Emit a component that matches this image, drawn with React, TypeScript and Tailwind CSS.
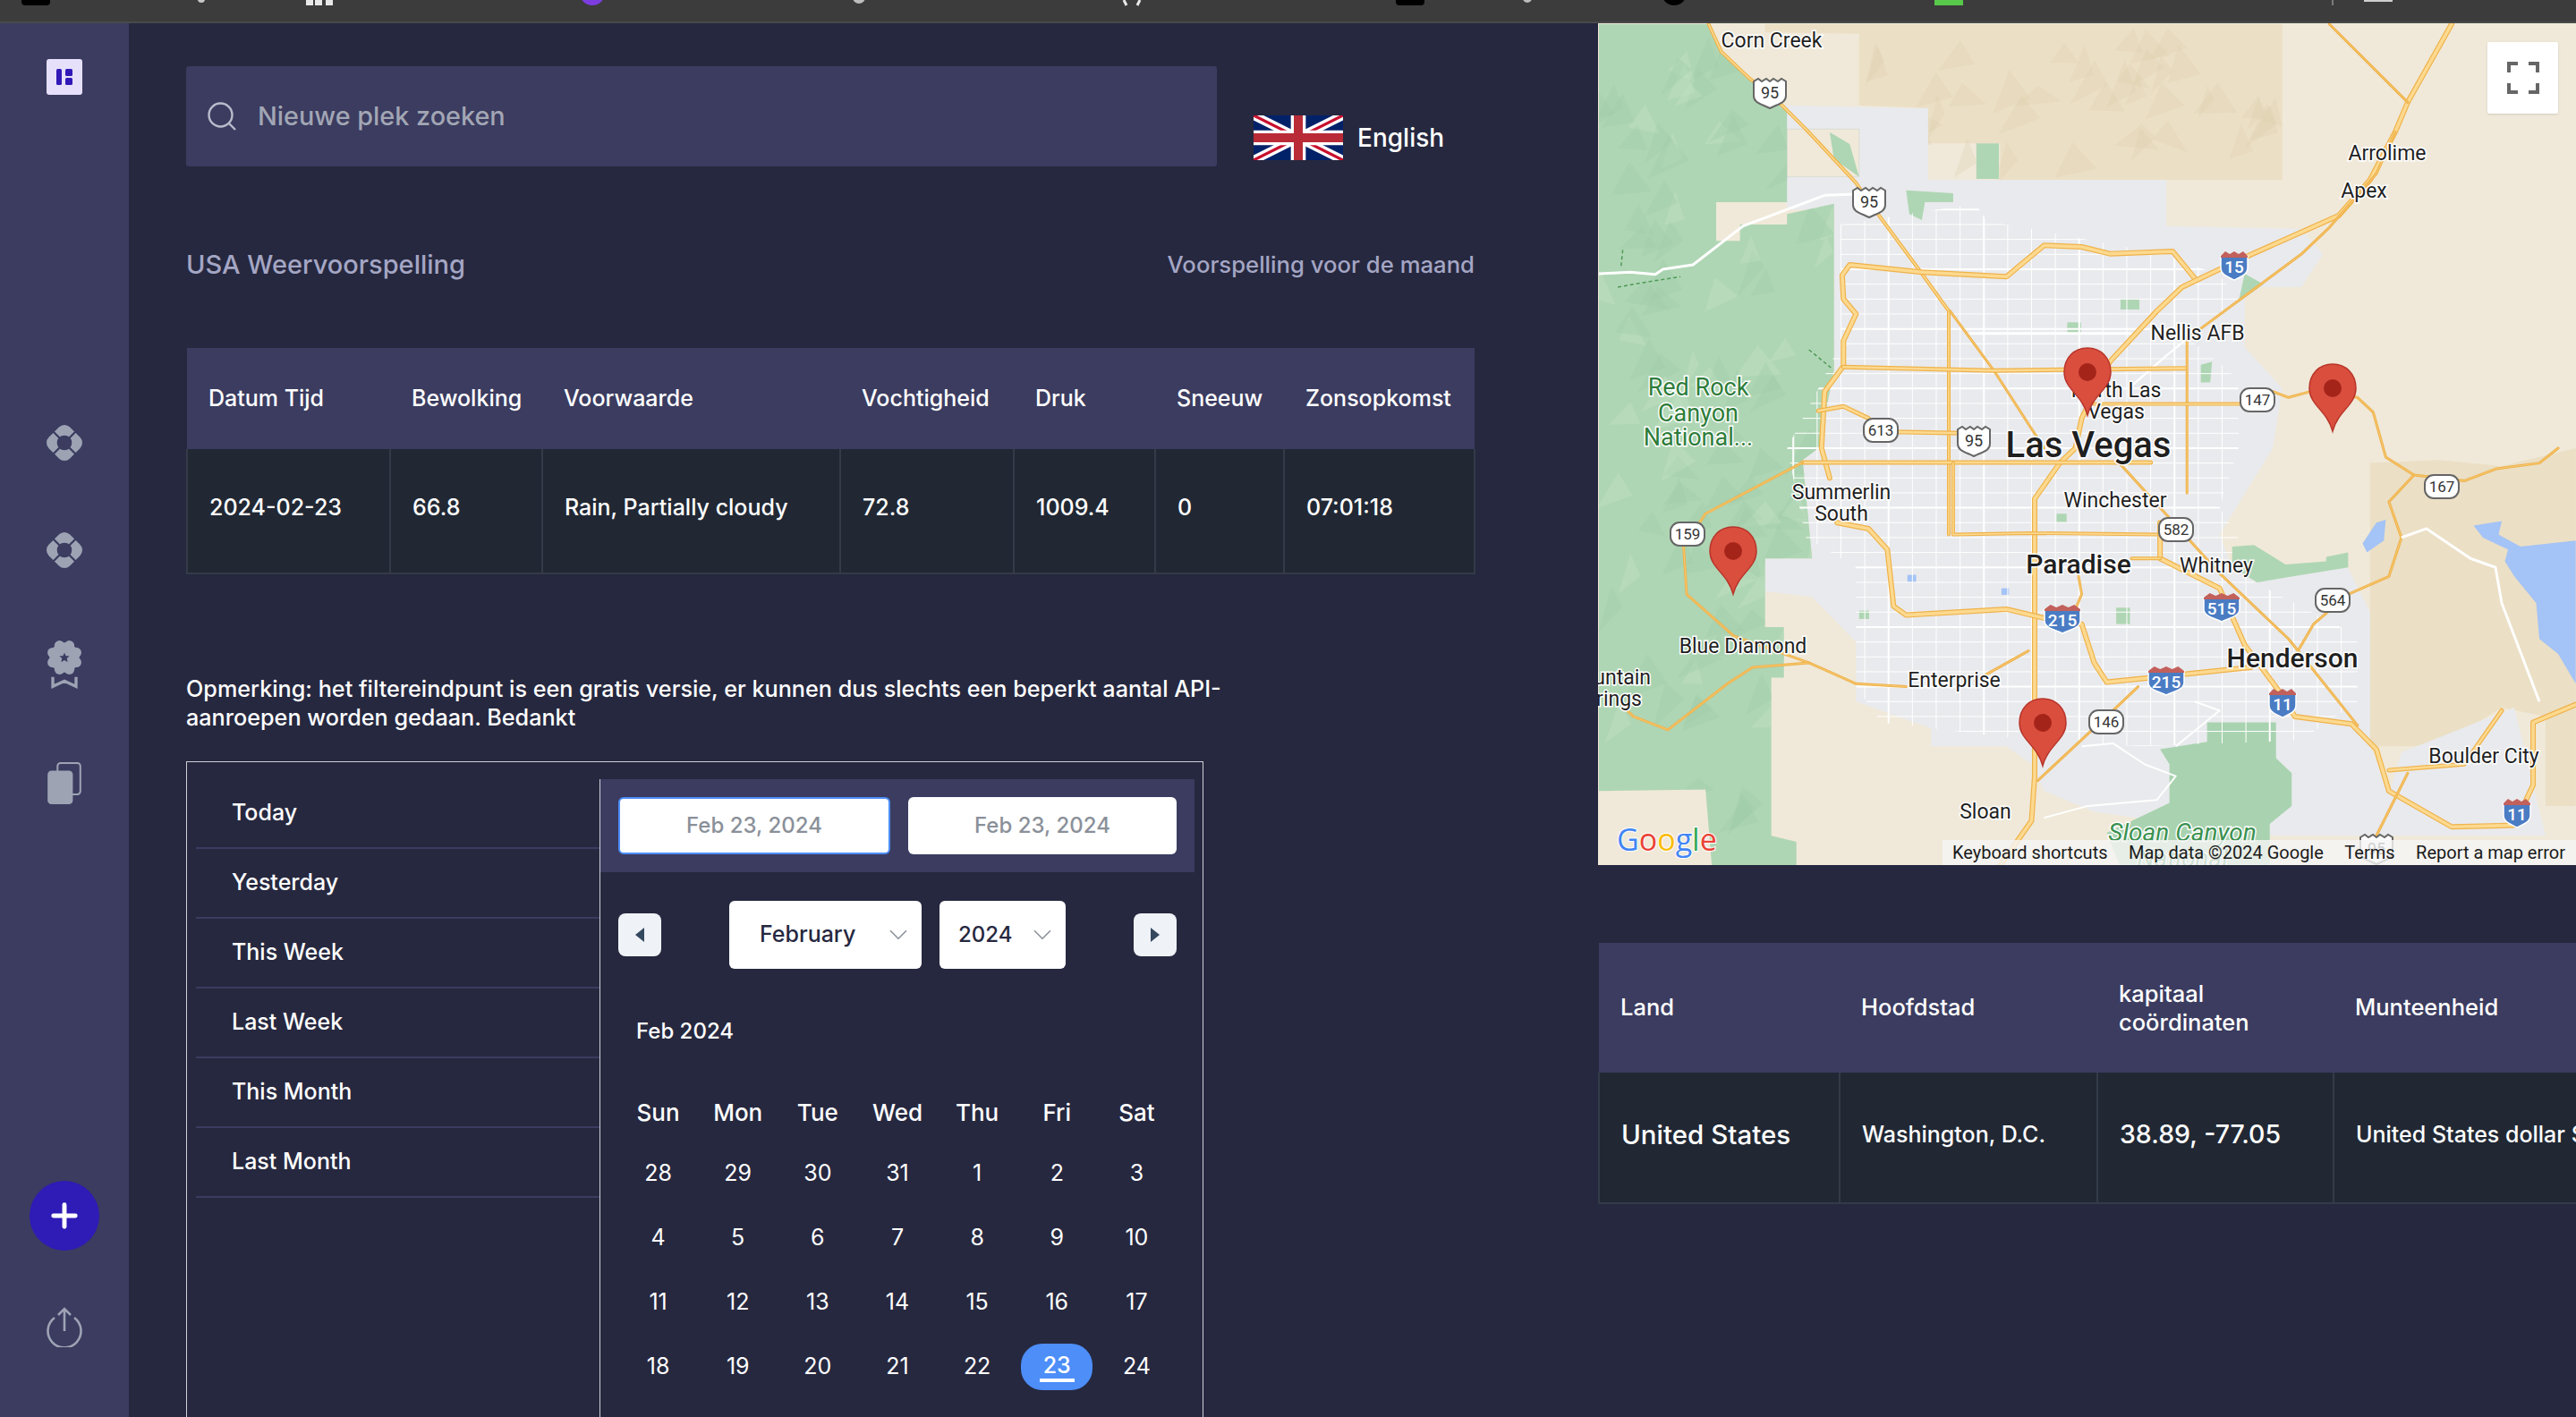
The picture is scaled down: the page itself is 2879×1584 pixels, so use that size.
import { ChevronDown, Plus } from "lucide-react";

const weatherCols = [
    { w: "w-[227px]", head: "Datum Tijd", cell: "2024-02-23" },
    { w: "w-[170px]", head: "Bewolking", cell: "66.8" },
    { w: "w-[333px]", head: "Voorwaarde", cell: "Rain, Partially cloudy" },
    { w: "w-[194px]", head: "Vochtigheid", cell: "72.8" },
    { w: "w-[158px]", head: "Druk", cell: "1009.4" },
    { w: "w-[144px]", head: "Sneeuw", cell: "0" },
    { w: "w-[213px]", head: "Zonsopkomst", cell: "07:01:18" },
];

const presets = ["Today", "Yesterday", "This Week", "Last Week", "This Month", "Last Month"];
const weekdays = ["Sun", "Mon", "Tue", "Wed", "Thu", "Fri", "Sat"];
const days = [28, 29, 30, 31, 1, 2, 3, 4, 5, 6, 7, 8, 9, 10, 11, 12, 13, 14, 15, 16, 17, 18, 19, 20, 21, 22, 23, 24];

const LifeBuoy = () => (
    <svg viewBox="0 0 120 120" className="h-10 w-10">
        <rect x="10" y="10" width="100" height="100" rx="26" transform="rotate(45 60 60)" fill="#9ea3b4" />
        <path d="M15 15L105 105M105 15L15 105" stroke="#3b3c60" strokeWidth="7" />
        <circle cx="60" cy="60" r="25" fill="#3b3c60" />
    </svg>
);

const Award = () => (
    <svg viewBox="0 0 120 165" className="h-[55px] w-10">
        <circle cx="60" cy="60" r="50" fill="#9ea3b4" />
        {[0, 45, 90, 135, 180, 225, 270, 315].map((a) => (
            <circle
                key={a}
                cx={60 + 43 * Math.cos((a * Math.PI) / 180 + 0.39)}
                cy={60 + 43 * Math.sin((a * Math.PI) / 180 + 0.39)}
                r="17"
                fill="#9ea3b4"
            />
        ))}
        <path d="M60 44l5 11h12l-9 8 3 12-11-6-11 6 3-12-9-8h12z" fill="#3b3c60" />
        <path d="M21 125v32l39-18 39 18v-32" fill="none" stroke="#9ea3b4" strokeWidth="10" />
    </svg>
);

const CopyIcon = () => (
    <svg viewBox="0 0 112 140" className="h-[47px] w-[38px]">
        <rect x="33" y="3" width="76" height="104" rx="10" fill="none" stroke="#9ea3b4" strokeWidth="6" />
        <rect x="0" y="28" width="84" height="112" rx="13" fill="#9ea3b4" />
    </svg>
);

const Sidebar = () => (
    <aside className="flex w-[144px] shrink-0 flex-col items-center bg-[#3b3c60]">
        <div className="mt-[40px] flex h-10 w-10 items-center justify-center rounded-[3px] bg-[#e6e0fb]">
            <svg viewBox="0 0 18 18" className="h-[18px] w-[18px]" fill="#3119b8">
                <rect x="0" y="0" width="6" height="18" rx="1.5" />
                <rect x="10" y="0" width="8" height="8" rx="1.5" />
                <rect x="10" y="10" width="8" height="8" rx="1.5" />
            </svg>
        </div>
        <div className="mt-[369px]">
            <LifeBuoy />
        </div>
        <div className="mt-[80px]">
            <LifeBuoy />
        </div>
        <div className="mt-[80px]">
            <Award />
        </div>
        <div className="mt-[82px]">
            <CopyIcon />
        </div>
        <button className="mt-[421px] flex h-[78px] w-[78px] items-center justify-center rounded-full bg-[#2f1bb6]">
            <Plus size={42} color="#ffffff" strokeWidth={2.8} />
        </button>
        <svg viewBox="0 0 40 46" className="mt-[62px] h-[46px] w-10" fill="none" stroke="#9ea3b4" strokeWidth="2.6">
            <path d="M9 13A18.5 18.5 0 1 0 31 13" />
            <path d="M20 28V3M13 10l7-7 7 7" />
        </svg>
    </aside>
);

const UkFlag = () => (
    <svg viewBox="0 0 60 30" preserveAspectRatio="none" className="h-[50px] w-[100px] shrink-0">
        <rect width="60" height="30" fill="#012169" />
        <path d="M0 0L60 30M60 0L0 30" stroke="#ffffff" strokeWidth="6" />
        <path d="M0 0L60 30M60 0L0 30" stroke="#c8102e" strokeWidth="2" />
        <path d="M30 0V30M0 15H60" stroke="#ffffff" strokeWidth="10" />
        <path d="M30 0V30M0 15H60" stroke="#b92b36" strokeWidth="6" />
    </svg>
);

const WeatherTable = () => (
    <table className="w-[1439px] table-fixed border-collapse text-left">
        <thead>
            <tr className="h-[113px] bg-[#3b3c60]">
                {weatherCols.map((c) => (
                    <th key={c.head} className={`${c.w} pl-[24px] text-[25px] font-medium text-white`}>
                        {c.head}
                    </th>
                ))}
            </tr>
        </thead>
        <tbody>
            <tr className="h-[139px] border-b-2 border-[#343b48] bg-[#212834]">
                {weatherCols.map((c) => (
                    <td key={c.head} className="border-x-2 border-[#343b48] pb-[6px] pl-[24px] text-[25px] font-medium text-white">
                        {c.cell}
                    </td>
                ))}
            </tr>
        </tbody>
    </table>
);

const CalendarBox = () => (
    <div className="mt-[33px] flex h-[760px] w-[1137px] border border-b-0 border-[#cfd0d8] pl-[10px] pr-[9px] pt-[19px]">
        <div className="w-[451px] shrink-0">
            {presets.map((p) => (
                <div key={p} className="flex h-[78px] items-center border-b-2 border-[#3b3c60] pl-[40px] text-[25px] font-medium text-white">
                    {p}
                </div>
            ))}
        </div>
        <div className="flex-1 border-l border-[#cfd0d8]">
            <div className="flex h-[104px] items-center gap-5 bg-[#3b3c60] px-5">
                <div className="flex h-[64px] flex-1 items-center justify-center rounded-[6px] border-2 border-[#4d8ef8] bg-white text-[24px] font-medium text-[#8a9099]">
                    Feb 23, 2024
                </div>
                <div className="flex h-[64px] flex-1 items-center justify-center rounded-[6px] bg-white text-[24px] font-medium text-[#8a9099]">
                    Feb 23, 2024
                </div>
            </div>
            <div className="mt-[32px] flex items-center justify-between px-5">
                <button className="flex h-12 w-12 items-center justify-center rounded-[8px] bg-[#eff2f7]">
                    <svg viewBox="0 0 10 16" className="h-4 w-[10px]" fill="#34495e">
                        <path d="M10 0V16L0 8Z" />
                    </svg>
                </button>
                <div className="flex gap-5">
                    <div className="flex h-[76px] w-[215px] items-center justify-between rounded-[6px] bg-white pl-[34px] pr-[9px] text-[25px] font-medium text-[#26283f]">
                        February
                        <ChevronDown size={34} color="#8f959e" strokeWidth={1.2} />
                    </div>
                    <div className="flex h-[76px] w-[141px] items-center justify-between rounded-[6px] bg-white pl-[21px] pr-[9px] text-[24px] font-medium text-[#26283f]">
                        2024
                        <ChevronDown size={34} color="#8f959e" strokeWidth={1.2} />
                    </div>
                </div>
                <button className="flex h-12 w-12 items-center justify-center rounded-[8px] bg-[#eff2f7]">
                    <svg viewBox="0 0 10 16" className="h-4 w-[10px]" fill="#34495e">
                        <path d="M0 0V16L10 8Z" />
                    </svg>
                </button>
            </div>
            <div className="mt-[50px] flex h-10 items-center pl-[40px] text-[24px] font-medium text-white">Feb 2024</div>
            <div className="mt-[50px] grid h-10 grid-cols-7 px-5">
                {weekdays.map((d) => (
                    <div key={d} className="flex items-center justify-center text-[26px] font-medium text-white">
                        {d}
                    </div>
                ))}
            </div>
            <div className="mt-[13px] grid grid-cols-7 px-5">
                {days.map((d, i) => (
                    <div key={i} className="flex h-[72px] items-center justify-center text-[25px] text-white">
                        {d === 23 ? (
                            <span className="flex h-[52px] w-[80px] items-center justify-center rounded-[24px] bg-[#4d8ef8] font-medium">
                                <span className="border-b-[4px] border-white px-[4px] leading-[30px]">23</span>
                            </span>
                        ) : (
                            d
                        )}
                    </div>
                ))}
            </div>
        </div>
    </div>
);

// map drawing helpers, road coords are read off the zoomed crops
const Road = ({ d, w = 5 }: { d: string; w?: number }) => (
    <g fill="none" strokeLinejoin="round" strokeLinecap="round">
        <path d={d} stroke="#efb24a" strokeWidth={w} vectorEffect="non-scaling-stroke" />
        <path d={d} stroke="#fcd98f" strokeWidth={w - 2.4} vectorEffect="non-scaling-stroke" />
    </g>
);

const White = ({ d, w = 2 }: { d: string; w?: number }) => (
    <path d={d} fill="none" stroke="#ffffff" strokeWidth={w} strokeLinejoin="round" vectorEffect="non-scaling-stroke" />
);

const Label = ({ x, y, t, size = 23, fill = "#1f1f1f", weight = 400, anchor = "middle", italic = false }: { x: number; y: number; t: string; size?: number; fill?: string; weight?: number; anchor?: "middle" | "end" | "start"; italic?: boolean }) => (
    <text
        x={x}
        y={y}
        textAnchor={anchor}
        dominantBaseline="central"
        fontFamily="Roboto, sans-serif"
        fontSize={size}
        fontWeight={weight}
        fontStyle={italic ? "italic" : "normal"}
        fill={fill}
        stroke="#ffffff"
        strokeWidth="3"
        paintOrder="stroke"
    >
        {t}
    </text>
);

const UsShield = ({ x, y, t }: { x: number; y: number; t: string }) => (
    <g transform={`translate(${x} ${y})`}>
        <path d="M-18 -13l5 -3 4 3 5 -3 4 3 4 -3 5 3 4 -3 5 3 0 16c0 8 -8 9 -18 14c-10 -5 -18 -6 -18 -14z" fill="#ffffff" stroke="#666666" strokeWidth="2" />
        <text textAnchor="middle" y="6" fontFamily="Roboto, sans-serif" fontSize="18" fill="#333333">{t}</text>
    </g>
);

const InterShield = ({ x, y, t }: { x: number; y: number; t: string }) => {
    const w = t.length > 2 ? 20 : 15;
    return (
        <g transform={`translate(${x} ${y})`}>
            <path d={`M${-w} -10H${w}V3C${w} 11 8 13 0 17C-8 13 ${-w} 11 ${-w} 3Z`} fill="#4a7cc4" stroke="#ffffff" strokeWidth="1.5" />
            <path d={`M${-w} -10l${w / 3} -5 ${w / 3} 3 ${w / 3} -3 ${w / 3} 3 ${w / 3} -3 ${w / 3} 5z`} fill="#c2605c" />
            <path d={`M${-w} -10H${w}V-8H${-w}Z`} fill="#c2605c" />
            <text textAnchor="middle" y="9" fontFamily="Roboto, sans-serif" fontSize="19" fontWeight="500" fill="#ffffff">{t}</text>
        </g>
    );
};

const StateShield = ({ x, y, t }: { x: number; y: number; t: string }) => (
    <g>
        <rect x={x - 19} y={y - 13} width="38" height="26" rx="10" fill="#ffffff" stroke="#666666" strokeWidth="2" />
        <text x={x} y={y + 6} textAnchor="middle" fontFamily="Roboto, sans-serif" fontSize="17" fill="#333333">{t}</text>
    </g>
);

const Pin = ({ x, y }: { x: number; y: number }) => (
    <g transform={`translate(${x - 26} ${y})`}>
        <path d="M26 0C11 0 0 11 0 27C0 46 20 52 26 75C32 52 52 46 52 27C52 11 41 0 26 0Z" fill="#da4e3e" stroke="#b8352a" strokeWidth="1.5" />
        <circle cx="26" cy="27" r="10" fill="#a5241a" />
    </g>
);

// scattered shading, same look as the terrain relief
const facets = (seed: number, n: number, x0: number, y0: number, x1: number, y1: number) => {
    let s = seed;
    const r = () => {
        s = (s * 16807) % 2147483647;
        return s / 2147483647;
    };
    return Array.from({ length: n }, () => {
        const x = x0 + r() * (x1 - x0);
        const y = y0 + r() * (y1 - y0);
        return `${x},${y} ${x + 10 + r() * 30},${y + 40 + r() * 70} ${x - 15 - r() * 25},${y + 60 + r() * 100}`;
    });
};

const greenShape =
    "10,78 185,78 205,170 250,260 310,370 310,675 197,675 197,805 235,805 235,750 310,750 310,715 385,680 385,1240 360,1500 335,1540 350,1870 275,1870 275,2100 305,2100 305,2270 285,2270 285,2800 325,2820 325,2900 190,2900 180,2645 10,2650";
const urbanShape =
    "300,350 535,360 535,600 915,600 915,755 1130,765 1165,850 1130,960 1040,960 1040,1160 1100,1300 1085,1500 1000,1790 1020,1900 1060,1950 1200,1880 1240,2050 1240,2500 1280,2700 1250,2800 1090,2800 900,2750 800,2720 720,2650 700,2560 660,2500 540,2500 540,2440 420,2350 420,2150 350,2000 275,1980 275,1870 350,1870 335,1540 360,1500 385,1240 385,700 310,700";
const gridShape =
    "395,750 610,680 630,740 690,760 910,850 1000,920 1030,1000 950,1130 1030,1270 1030,1500 1000,1700 1030,1800 1010,1900 1220,2130 1220,2350 1130,2480 880,2500 700,2480 460,2420 420,2300 420,1900 340,1800 310,1500 360,1300 395,1150";

const MapPanel = () => (
    <div className="relative h-[941px] w-full overflow-hidden bg-[#f0e9d9]">
        <svg viewBox="1786 25 1093 941" className="block h-full w-full">
            <defs>
                <clipPath id="gridClip">
                    <polygon points={gridShape} />
                </clipPath>
                <clipPath id="greenClip">
                    <polygon points={greenShape} />
                </clipPath>
            </defs>
            <g transform="translate(1780 0) scale(0.7007 0.3333)">
                <polygon points="275,78 1100,78 1100,600 650,600 650,478 535,478 535,360 425,350 425,110 275,105" fill="#ebdfc5" />
                {facets(77, 40, 450, 90, 1090, 480).map((p, i) => (
                    <polygon key={i} points={p} fill="#dfcfb0" opacity="0.3" />
                ))}
                <polygon points="1240,1550 1350,1540 1450,1560 1568,1500 1568,2700 1520,2700 1520,2400 1450,2370 1350,2500 1240,2500" fill="#ebdfc5" />
                <polygon points={urbanShape} fill="#e9eaed" />
                <polygon points="1290,2520 1470,2370 1520,2800 1250,2800" fill="#e9eaed" />
                <polygon points="310,430 425,430 425,590 310,590" fill="#f0e9d9" stroke="#c6d0c8" strokeWidth="1" />
                <polygon points={greenShape} fill="#afd6b4" />
                <g clipPath="url(#greenClip)">
                    {facets(1234, 110, 10, 78, 385, 2700).map((p, i) => (
                        <polygon key={i} points={p} fill={i % 3 ? "#9fcca8" : "#c2e2c6"} opacity="0.35" />
                    ))}
                </g>
                <polygon points="378,440 410,480 425,590 385,530" fill="#afd6b4" />
                <polygon points="612,478 648,478 648,597 612,597" fill="#afd6b4" />
                <polygon points="500,635 575,645 575,675 530,675 525,735 505,715" fill="#afd6b4" />
                <rect x="842" y="1000" width="30" height="35" fill="#afd6b4" />
                <rect x="757" y="1078" width="22" height="35" fill="#afd6b4" />
                <polygon points="970,1220 988,1210 985,1280 970,1280" fill="#afd6b4" />
                <polygon points="1040,915 1070,950 1030,1010" fill="#afd6b4" />
                <g transform="translate(0 1500)">
                    <polygon points="980,920 1090,920 1090,1040 1115,1090 1115,1200 1080,1260 1080,1397 840,1397 820,1290 920,1190 920,1060 905,1010 980,985" fill="#a9d3b0" />
                    <polygon points="1020,330 1055,325 1105,390 1170,380 1170,365 1205,350 1205,400 1060,450 1020,400" fill="#afd6b4" />
                    <polygon points="1405,260 1450,245 1445,290 1480,330 1568,310 1568,790 1540,690 1510,640 1505,520 1470,430 1455,380 1460,340 1420,300" fill="#a4c3f6" />
                    <polygon points="1250,250 1265,240 1262,310 1235,350 1228,320" fill="#a4c3f6" />
                    <rect x="502" y="425" width="14" height="24" fill="#a4c3f6" />
                    <rect x="652" y="470" width="12" height="22" fill="#a4c3f6" />
                    <rect x="425" y="545" width="16" height="28" fill="#afd6b4" />
                    <rect x="835" y="535" width="22" height="55" fill="#afd6b4" />
                    <rect x="740" y="220" width="16" height="28" fill="#afd6b4" />
                </g>
                <g clipPath="url(#gridClip)">
                    {Array.from({ length: 26 }, (_, i) => (
                        <White key={i} d={`M${320 + i * 38} 680V3000`} w={i % 4 ? 1 : 2} />
                    ))}
                    {Array.from({ length: 38 }, (_, i) => (
                        <White key={i} d={`M300 ${700 + i * 50}H1300`} w={i % 4 ? 1 : 2} />
                    ))}
                </g>
                <White d="M10 915L60 910L100 917L112 900L160 885L240 755L370 652L420 648" w={3} />
                <White d="M600 1115H860" w={3} />
                <White d="M860 1290L915 1190L950 1130" w={2.5} />
                <path d="M48 835L45 895M40 960L80 945L140 925M345 1170L380 1230" fill="none" stroke="#4d9a58" strokeWidth="1.5" strokeDasharray="4 3" vectorEffect="non-scaling-stroke" />

                <Road d="M185 78L205 170L250 260L283 310L340 430L420 610L441 675L520 900L568 1040L568 1500V1790" w={4} />
                <Road d="M570 1040L640 1240L720 1500" w={3} />
                <Road d="M960 930L925 840L825 848L780 825L720 820L660 925L525 910L410 885L398 920L400 1000L420 1050L400 1140L400 1225L370 1310L365 1500L378 1600" w={6} />
                <Road d="M1370 78L1300 340L1280 440L1240 600L1190 720L1040 860L940 960L900 1040L825 1210L780 1400L770 1500L745 1550L705 1670V2600L700 2750L650 2900" w={6} />
                <Road d="M1175 78L1300 340" w={3} />
                <Road d="M1280 440L1250 580L1175 760L1130 850L950 1130" w={3} />
                <Road d="M400 1228L640 1240L945 1232" w={5} />
                <Road d="M948 1130V1650" w={3} />
                <Road d="M800 1352H1035" w={4} />
                <Road d="M360 1375L400 1360L440 1400L460 1445L590 1450" w={5} />
                <Road d="M1085 1310L1110 1330L1145 1310L1220 1330L1245 1380L1265 1530L1310 1590L1270 1680L1290 1800L1270 1930L1205 1990L1150 2090L1125 2180" w={3} />
                <g transform="translate(0 1500)">
                    <Road d="M335 48H890" w={5} />
                    <Road d="M335 48L180 220L145 330L150 490L225 630L345 720L420 790L500 800" w={3} />
                    <Road d="M345 720L255 735L215 790L120 945L65 900L50 870" w={3} />
                    <Road d="M1310 90L1390 110L1440 70L1510 50L1540 0" w={3} />
                    <White d="M1290 300L1330 270L1400 370L1440 400L1450 520L1510 850" w={3} />
                    <Road d="M390 250L440 270L470 340L480 530L500 560L660 540L720 570L780 590L800 720L820 785L1050 735" w={6} />
                    <Road d="M575 50V290L700 285L905 290" w={4} />
                    <Road d="M905 250V370L1000 470L1040 660L1100 830L1120 900L1210 925L1250 1010L1270 1150L1370 1270L1470 1265L1500 1130L1500 920L1568 860" w={6} />
                    <Road d="M840 50L905 200L1000 420L1110 640L1220 930" w={3} />
                    <Road d="M775 430L780 490L770 540" w={3} />
                    <Road d="M695 680L610 780" w={3} />
                    <Road d="M870 800L840 860L710 1115" w={3} />
                    <Road d="M1450 880L1390 1060L1270 1080" w={5} />
                    <Road d="M1300 1090L1250 1300" w={3} />
                    <Road d="M860 370H905" w={4} />
                    <White d="M780 1000L830 990L880 1060L930 1100L900 1180L790 1200L720 1240M960 850L1000 880L930 1000" w={2} />
                </g>
            </g>

            <Label x={1980} y={44} t="Corn Creek" />
            <Label x={2668} y={170} t="Arrolime" />
            <Label x={2642} y={212} t="Apex" />
            <Label x={2456} y={371} t="Nellis AFB" />
            <Label x={2365} y={435} t="North Las" />
            <Label x={2365} y={459} t="Vegas" />
            <Label x={1898} y={432} t="Red Rock" size={27} fill="#2e7d3a" />
            <Label x={1898} y={461} t="Canyon" size={27} fill="#2e7d3a" />
            <Label x={1898} y={488} t="National..." size={27} fill="#2e7d3a" />
            <Label x={2058} y={549} t="Summerlin" />
            <Label x={2058} y={573} t="South" />
            <Label x={2364} y={558} t="Winchester" />
            <Label x={2477} y={631} t="Whitney" />
            <Label x={1948} y={721} t="Blue Diamond" />
            <Label x={2184} y={759} t="Enterprise" />
            <Label x={1845} y={756} t="Mountain" anchor="end" />
            <Label x={1835} y={780} t="Springs" anchor="end" />
            <Label x={2219} y={906} t="Sloan" />
            <Label x={2776} y={844} t="Boulder City" />
            <Label x={2439} y={929} t="Sloan Canyon" size={28} fill="#3b9150" italic />
            <Label x={2439} y={958} t="National" size={28} fill="#3b9150" italic />
            <Label x={2334} y={496} t="Las Vegas" size={40} weight={500} />
            <Label x={2323} y={629} t="Paradise" size={30} weight={500} />
            <Label x={2562} y={734} t="Henderson" size={30} weight={500} />

            <UsShield x={1978} y={103} t="95" />
            <UsShield x={2089} y={225} t="95" />
            <UsShield x={2206} y={492} t="95" />
            <UsShield x={2656} y={948} t="95" />
            <InterShield x={2497} y={295} t="15" />
            <InterShield x={2305} y={690} t="215" />
            <InterShield x={2483} y={677} t="515" />
            <InterShield x={2421} y={759} t="215" />
            <InterShield x={2551} y={784} t="11" />
            <InterShield x={2813} y={907} t="11" />
            <StateShield x={2523} y={446} t="147" />
            <StateShield x={2102} y={480} t="613" />
            <StateShield x={2729} y={543} t="167" />
            <StateShield x={2432} y={591} t="582" />
            <StateShield x={1886} y={596} t="159" />
            <StateShield x={2607} y={670} t="564" />
            <StateShield x={2354} y={806} t="146" />

            <Pin x={2333} y={388} />
            <Pin x={2607} y={406} />
            <Pin x={1937} y={588} />
            <Pin x={2283} y={780} />

            <text x={1807} y={950} fontFamily="Open Sans, sans-serif" fontSize="34" stroke="#ffffff" strokeWidth="2" paintOrder="stroke">
                <tspan fill="#4285f4">G</tspan>
                <tspan fill="#ea4335">o</tspan>
                <tspan fill="#fbbc05">o</tspan>
                <tspan fill="#4285f4">g</tspan>
                <tspan fill="#34a853">l</tspan>
                <tspan fill="#ea4335">e</tspan>
            </text>
        </svg>
        <div className="absolute right-[20px] top-[21px] flex h-[80px] w-[79px] items-center justify-center rounded-[2px] bg-white shadow-sm">
            <svg viewBox="0 0 36 36" className="h-9 w-9" fill="none" stroke="#666666" strokeWidth="4">
                <path d="M2 12V2H12M24 2H34V12M34 24V34H24M12 34H2V24" />
            </svg>
        </div>
        <div className="absolute bottom-0 right-0 flex h-[28px] w-[708px] items-center justify-between bg-[#f5f5f5]/80 pl-[11px] pr-[12px] font-[family-name:Roboto,sans-serif] text-[20px] text-[#1a1a1a]">
            <span>Keyboard shortcuts</span>
            <span>Map data ©2024 Google</span>
            <span>Terms</span>
            <span>Report a map error</span>
        </div>
    </div>
);

const CountryTable = () => (
    <table className="mt-[87px] w-[1400px] table-fixed border-collapse text-left text-white">
        <thead>
            <tr className="h-[145px] bg-[#3b3c60] text-[25.5px] font-medium">
                <th className="w-[269px] pl-[24px] font-medium">Land</th>
                <th className="w-[288px] pl-[24px] font-medium">Hoofdstad</th>
                <th className="w-[264px] pl-[24px] font-medium leading-[32px]">
                    kapitaal
                    <br />
                    coördinaten
                </th>
                <th className="pl-[24px] font-medium">Munteenheid</th>
            </tr>
        </thead>
        <tbody>
            <tr className="h-[146px] border-b-2 border-[#343b48] bg-[#212834] font-medium">
                <td className="border-x-2 border-[#343b48] pb-[6px] pl-[24px] text-[29.5px]">United States</td>
                <td className="border-x-2 border-[#343b48] pb-[6px] pl-[24px] text-[25px]">Washington, D.C.</td>
                <td className="border-x-2 border-[#343b48] pb-[6px] pl-[24px] text-[28.5px]">38.89, -77.05</td>
                <td className="whitespace-nowrap border-x-2 border-[#343b48] pb-[6px] pl-[24px] text-[25px]">United States dollar $</td>
            </tr>
        </tbody>
    </table>
);

const App = () => {
    return (
        <div className="flex h-screen w-full flex-col overflow-hidden bg-[#26283f] font-[family-name:Inter,sans-serif]">
            <div className="h-[26px] shrink-0 border-b-2 border-[#474a4a] bg-[#3c3c3c]">
                <svg viewBox="0 0 2879 24" className="block h-6 w-full">
                    <rect x="24" y="-6" width="32" height="12" rx="4" fill="#000000" />
                    <circle cx="225" cy="-1" r="4" fill="#c8c8c8" />
                    <rect x="342" y="0" width="8" height="6" fill="#e8e8e8" />
                    <rect x="352" y="0" width="8" height="6" fill="#e8e8e8" />
                    <rect x="364" y="0" width="8" height="6" fill="#e8e8e8" />
                    <circle cx="662" cy="-8" r="14" fill="#7c3de0" />
                    <circle cx="960" cy="-3" r="7" fill="#bdbdbd" />
                    <path d="M1256 0l3 6M1274 0l-3 6" stroke="#e8e8e8" strokeWidth="3" />
                    <rect x="1560" y="-6" width="32" height="12" rx="4" fill="#000000" />
                    <circle cx="1707" cy="-2" r="5" fill="#bdbdbd" />
                    <circle cx="1871" cy="-8" r="14" fill="#000000" />
                    <rect x="2162" y="0" width="32" height="6" fill="#58c84b" />
                    <rect x="2606" y="0" width="2" height="6" fill="#7a7a7a" />
                    <rect x="2642" y="0" width="32" height="2" fill="#cfcfcf" />
                </svg>
            </div>
            <div className="flex min-h-0 flex-1">
                <Sidebar />
                <main className="ml-[64px] w-[1442px] shrink-0">
                    <div className="mt-[48px] flex items-start">
                        <div className="flex h-[112px] w-[1152px] items-center rounded-[3px] bg-[#3b3c60] pl-[24px]">
                            <svg viewBox="0 0 32 32" className="h-8 w-8 shrink-0" fill="none" stroke="#b8bccb" strokeWidth="2.4">
                                <circle cx="14.5" cy="14.5" r="13" />
                                <path d="M24 24L31 31" />
                            </svg>
                            <span className="ml-[24px] text-[28.8px] font-medium text-[#a2a6b4]">Nieuwe plek zoeken</span>
                        </div>
                        <div className="ml-[41px] mt-[55px] flex items-center gap-[16px]">
                            <UkFlag />
                            <span className="text-[28px] font-medium text-white">English</span>
                        </div>
                    </div>
                    <div className="mt-[90px] flex h-10 w-[1440px] items-center justify-between">
                        <span className="text-[29px] font-medium text-[#a4a6c4]">USA Weervoorspelling</span>
                        <span className="text-[25.7px] font-medium text-[#a4a6c4]">Voorspelling voor de maand</span>
                    </div>
                    <div className="mt-[73px]">
                        <WeatherTable />
                    </div>
                    <p className="mt-[112px] text-[25.2px] font-medium leading-[32px] text-white">
                        Opmerking: het filtereindpunt is een gratis versie, er kunnen dus slechts een beperkt aantal API-
                        <br />
                        aanroepen worden gedaan. Bedankt
                    </p>
                    <CalendarBox />
                </main>
                <section className="ml-[136px] min-w-0 flex-1 overflow-hidden">
                    <MapPanel />
                    <CountryTable />
                </section>
            </div>
        </div>
    );
};

export default App;
